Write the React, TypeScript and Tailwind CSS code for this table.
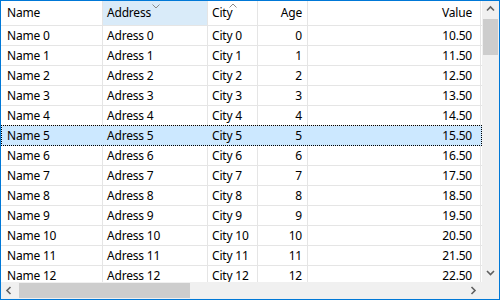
import React from "react";

const rows = Array.from({ length: 13 }, (_, i) => ({
  name: `Name ${i}`,
  address: `Adress ${i}`,
  city: `City ${i}`,
  age: `${i}`,
  value: (10.5 + i).toFixed(2),
}));

function Chevron({ dir, className }: { dir: "up" | "down" | "left" | "right"; className?: string }) {
  const pts: Record<string, string> = {
    up: "1,5.5 4.5,2 8,5.5",
    down: "1,2 4.5,5.5 8,2",
    left: "5.5,1 2,4.5 5.5,8",
    right: "2.5,1 6,4.5 2.5,8",
  };
  return (
    <svg width="9" height="9" viewBox="0 0 9 9" className={className}>
      <polyline points={pts[dir]} fill="none" stroke="#606060" strokeWidth="1.6" />
    </svg>
  );
}

export default function App() {
  return (
    <div
      className="w-[500px] h-[300px] border border-[#0078d7] bg-white flex flex-col text-[12px] tracking-[-0.2px] text-black overflow-hidden"
      style={{ fontFamily: '"Noto Sans", "Segoe UI", sans-serif' }}
    >
      <div className="flex flex-1 min-h-0">
        <div className="flex-1 min-w-0 overflow-hidden">
          {/* header */}
          <div className="flex h-[25px] border-b border-[#e5e5e5]">
            <div className="w-[102px] shrink-0 border-r border-[#e5e5e5] flex items-center pl-[6px]">Name</div>
            <div className="w-[105px] shrink-0 border-r border-[#e5e5e5] bg-[#d9ebf9] flex items-center pl-[4px] relative">
              Address
              <svg width="8" height="5" viewBox="0 0 8 5" className="absolute top-[3px] left-[49px]">
                <polyline points="0.5,0.5 4,4 7.5,0.5" fill="none" stroke="#8a8a8a" strokeWidth="1" />
              </svg>
            </div>
            <div className="w-[50px] shrink-0 border-r border-[#e5e5e5] flex items-center pl-[4px] relative">
              City
              <svg width="8" height="5" viewBox="0 0 8 5" className="absolute top-[2px] left-[21px]">
                <polyline points="0.5,4.5 4,1 7.5,4.5" fill="none" stroke="#8a8a8a" strokeWidth="1" />
              </svg>
            </div>
            <div className="w-[50px] shrink-0 border-r border-[#e5e5e5] flex items-center justify-end pr-[5px]">Age</div>
            <div className="w-[173px] shrink-0 border-r border-[#e5e5e5] flex items-center justify-end pr-[8px]">Value</div>
          </div>
          {/* rows */}
          {rows.map((r, i) => {
            const sel = i === 5;
            const cell = sel ? "border-r border-transparent" : "border-r border-[#e5e5e5]";
            return (
              <div
                key={i}
                className={
                  sel
                    ? "relative flex h-[20px] border-b border-[#cce8ff] bg-[#cce8ff]"
                    : "flex h-[20px] border-b border-[#e5e5e5]"
                }
              >
                <div className={`w-[102px] shrink-0 ${cell} flex items-center pl-[6px]`}>{r.name}</div>
                <div className={`w-[105px] shrink-0 ${cell} flex items-center pl-[4px]`}>{r.address}</div>
                <div className={`w-[50px] shrink-0 ${cell} flex items-center pl-[4px]`}>{r.city}</div>
                <div className={`w-[50px] shrink-0 ${cell} flex items-center justify-end pr-[5px]`}>{r.age}</div>
                <div className={`w-[173px] shrink-0 ${cell} flex items-center justify-end pr-[8px]`}>{r.value}</div>
                {sel && (
                  <div className="absolute left-0 right-0 -top-px -bottom-px border border-dotted border-black pointer-events-none" />
                )}
              </div>
            );
          })}
        </div>
        {/* vertical scrollbar */}
        <div className="w-[17px] shrink-0 bg-[#f0f0f0] flex flex-col items-center">
          <div className="h-[17px] flex items-center justify-center">
            <Chevron dir="up" />
          </div>
          <div className="w-[15px] h-[36px] mt-[1px] bg-[#cdcdcd]" />
          <div className="flex-1" />
          <div className="h-[17px] flex items-center justify-center">
            <Chevron dir="down" />
          </div>
        </div>
      </div>
      {/* horizontal scrollbar */}
      <div className="h-[17px] shrink-0 flex">
        <div className="flex-1 bg-[#f0f0f0] flex items-center">
          <div className="w-[17px] h-[17px] flex items-center justify-center">
            <Chevron dir="left" />
          </div>
          <div className="w-[171px] h-[15px] ml-[1px] bg-[#cdcdcd]" />
          <div className="flex-1" />
          <div className="w-[17px] h-[17px] flex items-center justify-center">
            <Chevron dir="right" />
          </div>
        </div>
        <div className="w-[17px] shrink-0 bg-[#f0f0f0]" />
      </div>
    </div>
  );
}
